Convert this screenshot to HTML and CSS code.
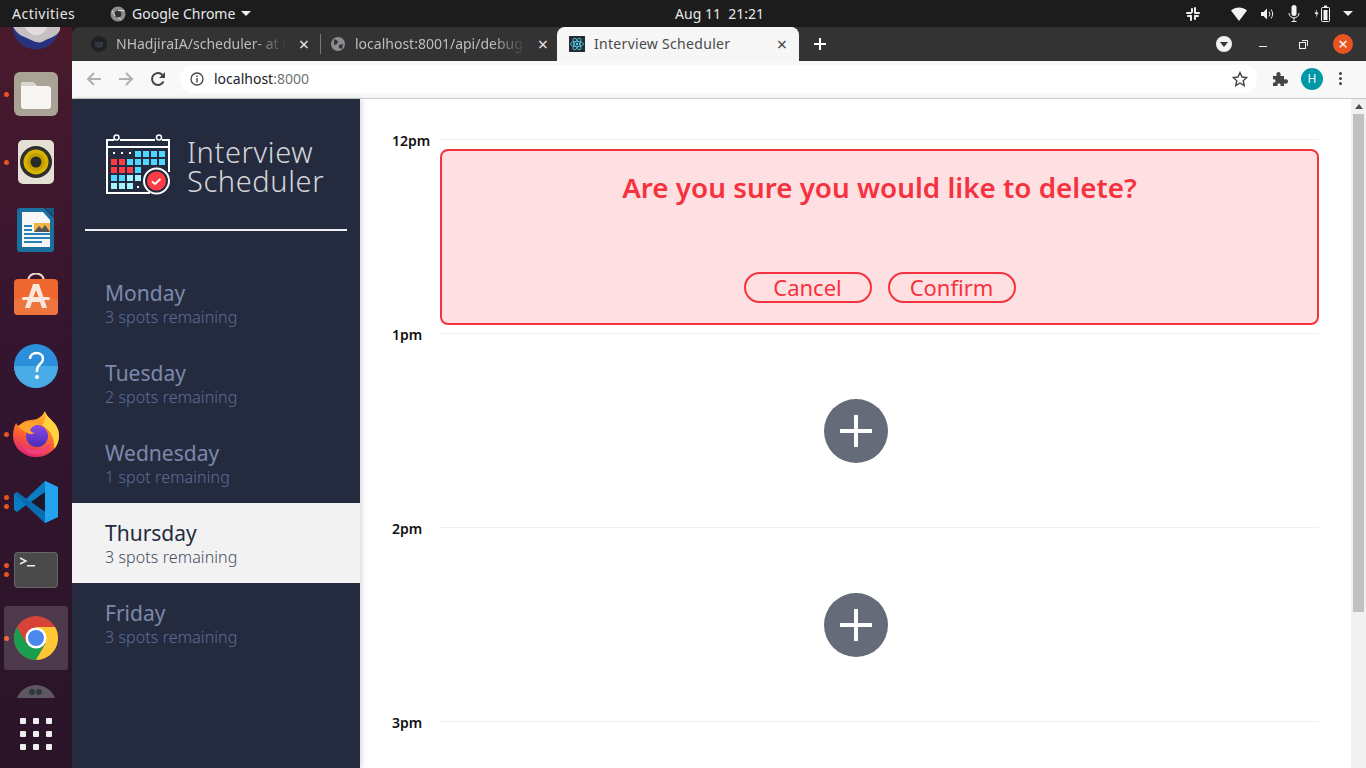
FILE: index.html
```html
<!DOCTYPE html>
<html lang="en">
<head>
  <meta charset="UTF-8" />
  <title>Interview Scheduler</title>
  <link rel="stylesheet" href="styles.css">
</head>
<body>
  <header class="topbar">
    <div class="topbar-left">
      <span class="activities">Activities</span>
      <span class="app-menu">
        <svg width="16" height="16" viewBox="0 0 16 16"><circle cx="8" cy="8" r="7.5" fill="#8d8d8d"/><circle cx="8" cy="8" r="3.4" fill="#333"/><path d="M8 4.6h6.4M5 10l-3-5.6M8 11.4 11.4 14" stroke="#ddd" stroke-width="1" fill="none"/></svg>
        Google Chrome
        <i class="caret"></i>
      </span>
    </div>
    <div class="clock">Aug 11&nbsp;&nbsp;21:21</div>
    <div class="tray">
      <svg class="tray-slack" width="14" height="14" viewBox="0 0 14 14" fill="#eee"><rect x="5" y="1" width="2" height="5" rx="1"/><rect x="8" y="0" width="2" height="6" rx="1"/><rect x="0" y="5" width="6" height="2" rx="1"/><rect x="8" y="5" width="6" height="2" rx="1"/><rect x="1" y="8" width="5" height="2" rx="1"/><rect x="8" y="8" width="5" height="2" rx="1"/><rect x="4" y="8" width="2" height="6" rx="1"/><rect x="8" y="8" width="2" height="5" rx="1"/></svg>
      <svg class="tray-wifi" width="16" height="14" viewBox="0 0 16 14"><path d="M0 3.500C4.400-.6 11.600-.6 16 3.500L8 14z" fill="#f2f2f2"/></svg>
      <svg class="tray-sound" width="15" height="14" viewBox="0 0 15 14" fill="none"><path d="M1 5h2.500L7 1.500v11L3.500 9H1z" fill="#f2f2f2"/><path d="M9 4.500a4 4 0 0 1 0 5M11 2.500a7 7 0 0 1 0 9" stroke="#f2f2f2"/></svg>
      <svg class="tray-mic" width="12" height="17" viewBox="0 0 12 17" fill="none"><rect x="3.500" y="0" width="5" height="11" rx="2.500" fill="#f2f2f2"/><path d="M1 8c0 6.500 10 6.500 10 0M6 13v3.500M3.500 16.500h5" stroke="#f2f2f2"/></svg>
      <svg class="tray-battery" width="17" height="17" viewBox="0 0 17 17" fill="none"><path d="M3 4 .6 9h2L1.800 13 4.500 7.500h-2z" fill="#f2f2f2"/><rect x="7.500" y="2.500" width="8" height="14" rx="1" stroke="#f2f2f2"/><rect x="10" y="0.500" width="3" height="2" fill="#f2f2f2"/><rect x="9.500" y="5" width="4" height="10" fill="#f2f2f2"/></svg>
      <i class="caret"></i>
    </div>
  </header>

  <div class="desktop">
    <nav class="dock">
      <div class="dock-item dock-first">
        <svg width="48" height="48" viewBox="0 0 48 48"><circle cx="24" cy="24" r="23.500" fill="#27337f"/><path d="M0 22H48V28C44 36 36 36 30 40 24 42 16 36 10 34 6 32 2 28 0 22z" fill="#c6bfc3"/><path d="M12 24H36C33 31 27 34 22 33 18 32 14 28 12 24z" fill="#e2dcdc"/></svg>
      </div>
      <div class="dock-item has-dot">
        <svg width="44" height="44" viewBox="0 0 44 44"><rect x="0" y="0" width="44" height="44" rx="6" fill="#a8a394"/><path d="M7 13a3 3 0 0 1 3-3h9l4 4h11a3 3 0 0 1 3 3v17a3 3 0 0 1-3 3H10a3 3 0 0 1-3-3z" fill="#f8f6f4"/><path d="M7 13a3 3 0 0 1 3-3h9l4 4H7z" fill="#d9d6d0"/></svg>
      </div>
      <div class="dock-item has-dot">
        <svg width="38" height="44" viewBox="0 0 38 44"><rect width="36" height="44" x="1" rx="5" fill="#e4e0d4"/><circle cx="19" cy="22" r="16" fill="#2e2e2e"/><circle cx="19" cy="22" r="12.500" fill="#d8b400"/><circle cx="19" cy="22" r="9" fill="#c29f00"/><circle cx="19" cy="22" r="5.500" fill="#2a2a2a"/></svg>
      </div>
      <div class="dock-item">
        <svg width="38" height="44" viewBox="0 0 38 44"><path d="M3 0h24l10 10v31a3 3 0 0 1-3 3H3a3 3 0 0 1-3-3V3a3 3 0 0 1 3-3z" fill="#1a6f9f"/><path d="M5 4h21l7 8v27H5z" fill="#f6f6f6"/><path d="M28 0h9v9z" fill="#125a86"/><path d="M7 17h8v2H7zM7 21h8v2H7zM7 25h26v2H7zM7 29h26v2H7zM7 33h18v2H7z" fill="#2384ba"/><rect x="17" y="15" width="16" height="9" fill="#f2b544"/><path d="M17 24l5-6 3 3 3-4 5 7z" fill="#555"/></svg>
      </div>
      <div class="dock-item">
        <svg class="dock-raised" width="44" height="44" viewBox="0 0 44 44"><path d="M14 8c0-10 16-10 16 0" fill="none" stroke="#eadcc8" stroke-width="2"/><rect y="6" width="44" height="36" rx="4" fill="#f0672f"/><rect y="26" width="44" height="16" rx="4" fill="#ee7440"/><path d="M19 11h6l8 24h-5l-2-6h-8l-2 6h-5zM22 17l-3 8h6z" fill="#fbe8dc"/><rect x="8" y="24" width="28" height="3" rx="1.500" fill="#fbe8dc"/></svg>
      </div>
      <div class="dock-item">
        <svg width="44" height="44" viewBox="0 0 44 44"><circle cx="22" cy="22" r="22" fill="#2b8fdc"/><path d="M0 22h44a22 22 0 0 1-44 0z" fill="#49ace6"/><path d="M16 15c0-8 13-8 13 0 0 5-6 5-6 11v2" fill="none" stroke="#fff" stroke-width="2.500"/><circle cx="23" cy="33" r="2" fill="#fff"/></svg>
      </div>
      <div class="dock-item has-dot">
        <svg width="46" height="46" viewBox="0 0 46 46">
          <defs>
            <linearGradient id="ffBody" x1="0.700" y1="0" x2="0.300" y2="1"><stop offset="0" stop-color="#ffc02e"/><stop offset="0.550" stop-color="#ff6a2a"/><stop offset="1" stop-color="#e0206f"/></linearGradient>
            <linearGradient id="ffGlobe" x1="0.500" y1="0" x2="0.500" y2="1"><stop offset="0" stop-color="#8a4be8"/><stop offset="1" stop-color="#4b2ab8"/></linearGradient>
          </defs>
          <path d="M32 0c1 5 6 8 10 13 3 4 4 8 4 12a23 21 0 0 1-46 0c0-5 1-9 3-13 1 2 2 3 3 3 3-4 7-6 12-6 6 0 11-3 14-9z" fill="url(#ffBody)"/>
          <path d="M32 0c1 5 6 8 10 13 3 4 4 8 4 12 0 5-2 10-5 13 1-9-2-18-12-24 3-3 4-9 3-14z" fill="#ffd23f"/>
          <circle cx="24" cy="25" r="11" fill="url(#ffGlobe)"/>
          <path d="M5 15c6-5 17-6 23-1-5-1-9 1-11 5 1 2 3 3 5 3-3 2-7 1-9-1-3-1-6-3-8-6z" fill="#ffa52a"/>
          <path d="M8 33c5 6 15 8 22 5 4-2 7-5 9-8-2 8-9 13-17 13-6 0-11-4-14-10z" fill="#f0408a"/>
        </svg>
      </div>
      <div class="dock-item has-dots">
        <svg width="44" height="42" viewBox="0 0 44 42"><path d="M31 0l13 6v30l-13 6L12 24 3 31 0 29V13l3-2 9 7z" fill="#0a7cc4"/><path d="M31 0l13 6v30l-13 6z" fill="#22a3ee"/><path d="M31 11 17 21l14 10z" fill="#211528"/><path d="M0 13l3-2 28 20v11L0 13z" fill="#0a6cb0"/></svg>
      </div>
      <div class="dock-item has-dots">
        <svg width="44" height="36" viewBox="0 0 44 36"><rect width="44" height="36" rx="4" fill="#4a4a4a"/><rect x=".5" y=".5" width="43" height="35" rx="3.500" fill="none" stroke="#666"/><path d="M6 6l6 3-6 3" fill="none" stroke="#eee" stroke-width="1.400"/><rect x="13" y="13" width="8" height="1.500" fill="#eee"/></svg>
      </div>
      <div class="dock-item has-dot is-active">
        <svg width="44" height="44" viewBox="0 0 44 44"><circle cx="22" cy="22" r="22" fill="#d9443a"/><path d="M2.950 11A22 22 0 0 0 22 44L31.500 27.500 22 22 12.500 27.500Z" fill="#1a9e50"/><path d="M41.050 11A22 22 0 0 1 22 44L31.500 27.500 22 22V11Z" fill="#fcc934"/><circle cx="22" cy="22" r="10.500" fill="#fff"/><circle cx="22" cy="22" r="8" fill="#4a88ee"/></svg>
      </div>
      <div class="dock-clipped">
        <svg width="44" height="26" viewBox="0 0 44 26"><circle cx="22" cy="33.400" r="20.400" fill="#5e5660"/><circle cx="18" cy="20" r="3" fill="#2d3a3c"/><circle cx="25" cy="20" r="3" fill="#2d3a3c"/></svg>
      </div>
      <div class="dock-grid">
        <i></i><i></i><i></i><i></i><i></i><i></i><i></i><i></i><i></i>
      </div>
    </nav>

    <div class="browser">
      <div class="tabstrip">
        <div class="tab">
          <svg class="favicon" viewBox="0 0 16 16"><circle cx="8" cy="8" r="8" fill="#1e2226"/><path d="M4 5l1.500 1h5L12 5v4c0 2-1.500 3-4 3s-4-1-4-3z" fill="#33383d"/></svg>
          <span class="tab-title">NHadjiraIA/scheduler- at t</span>
          <span class="tab-close">×</span>
        </div>
        <div class="tab tab-split">
          <svg class="favicon" viewBox="0 0 16 16"><circle cx="8" cy="8" r="7" fill="#8a8d91"/><path d="M4 3l4 2-1 3-3 1zM9 9l4-1-1 5-3-1z" fill="#333"/></svg>
          <span class="tab-title">localhost:8001/api/debug</span>
          <span class="tab-close">×</span>
        </div>
        <div class="tab tab-active">
          <svg class="favicon" viewBox="0 0 16 16" fill="none"><rect width="16" height="18" y="-1" rx="2" fill="#1f2a33"/><g stroke="#5fd3f3" stroke-width=".8"><ellipse cx="8" cy="8" rx="6.500" ry="2.600"/><ellipse cx="8" cy="8" rx="6.500" ry="2.600" transform="rotate(60 8 8)"/><ellipse cx="8" cy="8" rx="6.500" ry="2.600" transform="rotate(120 8 8)"/></g><circle cx="8" cy="8" r="1.200" fill="#5fd3f3"/></svg>
          <span class="tab-title">Interview Scheduler</span>
          <span class="tab-close">×</span>
        </div>
        <svg class="new-tab" width="14" height="14" viewBox="0 0 14 14"><path d="M7 1v12M1 7h12" stroke="#fff" stroke-width="2"/></svg>
        <div class="window-btns">
          <span class="profile-down"><i class="caret caret-dark"></i></span>
          <span class="win-min"></span>
          <svg class="win-restore" width="9" height="9" viewBox="0 0 9 9" fill="none"><rect x=".5" y="2.500" width="6" height="6" stroke="#eee"/><path d="M3 .5h5.500V6" stroke="#eee"/></svg>
          <span class="win-close">×</span>
        </div>
      </div>

      <div class="toolbar">
        <svg class="tool" width="16" height="16" viewBox="0 0 16 16" fill="none"><path d="M15 8H2M8 2 2 8l6 6" stroke="#b0b0b0" stroke-width="2"/></svg>
        <svg class="tool" width="16" height="16" viewBox="0 0 16 16" fill="none"><path d="M1 8h13M8 2l6 6-6 6" stroke="#b0b0b0" stroke-width="2"/></svg>
        <svg class="tool" width="16" height="16" viewBox="0 0 16 16" fill="none"><path d="M13.500 10.500A6 6 0 1 1 12.500 4" stroke="#444" stroke-width="2"/><path d="M15 1v6H9z" fill="#444"/></svg>
        <div class="omnibox">
          <svg width="14" height="14" viewBox="0 0 14 14" fill="none"><circle cx="7" cy="7" r="6" stroke="#444" stroke-width="1.300"/><path d="M7 6v4.500M7 3.500v1.500" stroke="#444" stroke-width="1.400"/></svg>
          <span class="url">localhost<span class="url-port">:8000</span></span>
          <svg class="star" width="16" height="16" viewBox="0 0 16 16"><path d="M8 1.500 10 6l4.800.5-3.600 3.200 1 4.800L8 12l-4.200 2.500 1-4.800L1.200 6.500 6 6z" fill="none" stroke="#444" stroke-width="1.400"/></svg>
        </div>
        <svg class="tool-puzzle" width="16" height="16" viewBox="0 0 16 16"><path d="M1 5h3.500C4 2 5 1 6.500 1S9 2 8.500 5H12v3.500c3-.5 4 .5 4 2s-1 2.500-4 2V15H8.500c.5-2-.500-2.500-1.500-2.500S5 13 5.500 15H1v-3.500c2 .5 2.500-.5 2.500-1.500S3 8 1 8.500z" fill="#444"/></svg>
        <span class="avatar">H</span>
        <span class="kebab"><i></i><i></i><i></i></span>
      </div>

      <div class="page">
        <aside class="sidebar">
          <div class="brand">
            <svg class="brand-logo" width="64" height="62" viewBox="0 0 64 62" fill="none">
              <path d="M44 59H1V6h7M14 6h35M56 6h7v32" stroke="#fff" stroke-width="2"/>
              <path d="M1 13h62" stroke="#fff" stroke-width="2"/>
              <circle cx="10.500" cy="3.500" r="2.500" stroke="#fff" stroke-width="1.500"/>
              <circle cx="53" cy="3.500" r="2.500" stroke="#fff" stroke-width="1.500"/>
              <g fill="#fff">
                <rect x="7" y="18" width="2" height="2"/><rect x="15" y="18" width="2" height="2"/><rect x="23" y="18" width="2" height="2"/><rect x="31" y="52" width="2" height="2"/>
              </g>
              <g fill="#4fd8ff">
                <rect x="29" y="17" width="6" height="6"/><rect x="37" y="17" width="6" height="6"/><rect x="45" y="17" width="6" height="6"/><rect x="53" y="17" width="6" height="6"/>
                <rect x="21" y="25" width="6" height="6"/><rect x="29" y="25" width="6" height="6"/><rect x="37" y="25" width="6" height="6"/><rect x="45" y="25" width="6" height="6"/><rect x="53" y="25" width="6" height="6"/>
                <rect x="29" y="33" width="6" height="6"/><rect x="5" y="41" width="6" height="6"/><rect x="13" y="41" width="6" height="6"/>
              </g>
              <g fill="#ff3b45">
                <rect x="5" y="25" width="6" height="6"/><rect x="13" y="25" width="6" height="6"/>
                <rect x="5" y="33" width="6" height="6"/><rect x="13" y="33" width="6" height="6"/><rect x="21" y="33" width="6" height="6"/>
              </g>
              <g fill="#a5f3ff">
                <rect x="21" y="41" width="6" height="6"/><rect x="29" y="41" width="6" height="6"/>
                <rect x="5" y="49" width="6" height="6"/><rect x="13" y="49" width="6" height="6"/><rect x="21" y="49" width="6" height="6"/>
              </g>
              <circle cx="50.500" cy="47" r="12.500" fill="#242b3f" stroke="#fff" stroke-width="2"/>
              <circle cx="50.500" cy="47" r="9.500" fill="#ff3b45"/>
              <path d="M46 47.500l3 2.500 5.500-5" stroke="#fff" stroke-width="2"/>
            </svg>
            <div class="brand-name">Interview<br>Scheduler</div>
          </div>
          <hr class="brand-rule">
          <ul class="days">
            <li class="day"><h2>Monday</h2><p>3 spots remaining</p></li>
            <li class="day"><h2>Tuesday</h2><p>2 spots remaining</p></li>
            <li class="day"><h2>Wednesday</h2><p>1 spot remaining</p></li>
            <li class="day day-selected"><h2>Thursday</h2><p>3 spots remaining</p></li>
            <li class="day"><h2>Friday</h2><p>3 spots remaining</p></li>
          </ul>
        </aside>

        <main class="schedule">
          <article class="slot">
            <h4 class="slot-time">12pm</h4>
            <div class="slot-body">
              <div class="confirm">
                <h1>Are you sure you would like to delete?</h1>
                <div class="confirm-actions">
                  <button type="button">Cancel</button>
                  <button type="button">Confirm</button>
                </div>
              </div>
            </div>
          </article>
          <article class="slot">
            <h4 class="slot-time">1pm</h4>
            <div class="slot-body slot-empty">
              <span class="add-btn"><svg width="32" height="32" viewBox="0 0 32 32"><path d="M16 0v32M0 16h32" stroke="#fff" stroke-width="4"/></svg></span>
            </div>
          </article>
          <article class="slot">
            <h4 class="slot-time">2pm</h4>
            <div class="slot-body slot-empty">
              <span class="add-btn"><svg width="32" height="32" viewBox="0 0 32 32"><path d="M16 0v32M0 16h32" stroke="#fff" stroke-width="4"/></svg></span>
            </div>
          </article>
          <article class="slot">
            <h4 class="slot-time">3pm</h4>
            <div class="slot-body"></div>
          </article>
        </main>

        <div class="scrollbar">
          <i class="arrow-up"></i>
          <div class="thumb"></div>
        </div>
      </div>
    </div>
  </div>
</body>
</html>
```

FILE: styles.css
```css
* {
  box-sizing: border-box;
}

html, body {
  margin: 0;
  height: 768px;
  overflow: hidden;
}

body {
  font-family: "Noto Sans", sans-serif;
  background-color: #1c1c1c;
}

h1, h2, h4, p, ul {
  margin: 0;
  padding: 0;
}

/* ubuntu top bar */
.topbar {
  height: 27px;
  background-color: #1c1c1c;
  color: #e8e8e8;
  font-size: 14px;
  display: grid;
  grid-template-columns: 1fr auto 1fr;
  align-items: center;
  padding: 0 12px;
}

.topbar-left {
  display: flex;
  align-items: center;
}

.activities {
  width: 98px;
  letter-spacing: 0.5px;
}

.app-menu {
  display: flex;
  align-items: center;
  gap: 6px;
}

.caret {
  width: 0;
  height: 0;
  border-left: 5px solid transparent;
  border-right: 5px solid transparent;
  border-top: 5px solid #eee;
  display: inline-block;
}

.clock {
  margin-left: 73px;
}

.tray {
  display: flex;
  align-items: center;
  justify-content: flex-end;
  padding-right: 1px;
}

.tray-wifi {
  margin-left: 31px;
}

.tray-sound {
  margin-left: 13px;
}

.tray-mic {
  margin-left: 13px;
}

.tray-battery {
  margin-left: 14px;
}

.tray .caret {
  margin-left: 12px;
}

/* dock + browser */
.desktop {
  display: flex;
  height: 741px;
}

.dock {
  width: 72px;
  flex: none;
  background: linear-gradient(180deg, #4a1a2c 0%, #33152f 45%, #2a1428 100%);
  overflow: hidden;
}

.dock-item {
  height: 68px;
  display: flex;
  align-items: center;
  justify-content: center;
  position: relative;
}

.dock-first {
  margin-top: -35px;
}

.dock-raised {
  margin-bottom: 6px;
}

.has-dot::before,
.has-dots::before,
.has-dots::after {
  content: "";
  position: absolute;
  left: 4px;
  top: 32px;
  width: 5px;
  height: 5px;
  border-radius: 50%;
  background-color: #e95420;
}

.has-dots::before {
  top: 27px;
}

.has-dots::after {
  top: 36px;
}

.is-active::after {
  content: "";
  position: absolute;
  left: 4px;
  right: 4px;
  top: 2px;
  bottom: 2px;
  border-radius: 3px;
  background-color: rgba(255,255,255,0.16);
}

.is-active svg {
  position: relative;
  z-index: 1;
}

.dock-clipped {
  height: 26px;
  display: flex;
  justify-content: center;
  overflow: hidden;
}

.dock-grid {
  margin: 20px 0 0 20px;
  width: 32px;
  display: grid;
  grid-template-columns: repeat(3, 6px);
  grid-auto-rows: 6px;
  gap: 7px;
}

.dock-grid i {
  background-color: #eee;
  border-radius: 1px;
}

.browser {
  flex: 1;
  min-width: 0;
  display: flex;
  flex-direction: column;
}

/* tabs */
.tabstrip {
  height: 34px;
  flex: none;
  background-color: #333334;
  display: flex;
  align-items: center;
  padding-left: 9px;
  border-radius: 8px 0 0 0;
}

.tab {
  width: 239px;
  height: 34px;
  display: flex;
  align-items: center;
  gap: 9px;
  padding: 0 8px 0 10px;
  color: #bdbec0;
  font-size: 14px;
  position: relative;
}

.tab-split::before {
  content: "";
  position: absolute;
  left: 0;
  top: 7px;
  height: 20px;
  width: 1px;
  background-color: #7a7a7a;
}

.favicon {
  width: 16px;
  height: 16px;
  flex: none;
}

.tab-title {
  flex: 1;
  min-width: 0;
  padding-bottom: 1px;
  white-space: nowrap;
  overflow: hidden;
  -webkit-mask-image: linear-gradient(90deg, #000 80%, transparent 100%);
  mask-image: linear-gradient(90deg, #000 80%, transparent 100%);
}

.tab-close {
  width: 16px;
  flex: none;
  text-align: center;
  color: #e8e8e8;
  font-size: 18px;
  line-height: 16px;
}

.tab-active {
  background-color: #f6f6f6;
  color: #4a4a4a;
  border-radius: 8px 8px 0 0;
  box-shadow: -2px 0 0 #f6f6f6, 1px 0 0 #f6f6f6;
}

.tab-active .tab-close {
  color: #444;
}

.tab-active .tab-title {
  letter-spacing: 0.3px;
  -webkit-mask-image: none;
  mask-image: none;
}

.new-tab {
  margin-left: 15px;
}

.window-btns {
  margin-left: auto;
  display: flex;
  align-items: center;
  padding-right: 13px;
}

.profile-down {
  width: 16px;
  height: 16px;
  border-radius: 50%;
  background-color: #f2f2f2;
  display: flex;
  align-items: center;
  justify-content: center;
}

.caret-dark {
  border-left-width: 4px;
  border-right-width: 4px;
  border-top-color: #333;
}

.win-min {
  width: 8px;
  height: 1px;
  background-color: #eee;
  margin: 5px 0 0 27px;
}

.win-restore {
  margin-left: 32px;
}

.win-close {
  width: 20px;
  height: 20px;
  margin-left: 25px;
  border-radius: 50%;
  background-color: #e95420;
  color: #fff;
  font-size: 17px;
  line-height: 19px;
  text-align: center;
}

/* address bar */
.toolbar {
  height: 38px;
  flex: none;
  background-color: #f8f8f8;
  border-bottom: 1px solid #c8c8c8;
  display: flex;
  align-items: center;
  padding: 0 0 2px 14px;
}

.tool {
  margin-right: 16px;
}

.omnibox {
  width: 1077px;
  height: 28px;
  margin-left: -2px;
  padding: 0 9px 0 10px;
  border-radius: 14px;
  background-color: #fff;
  display: flex;
  align-items: center;
  gap: 10px;
}

.url {
  font-size: 14px;
  color: #202124;
}

.url-port {
  color: #70757a;
}

.star {
  margin-left: auto;
}

.tool-puzzle {
  margin-left: 15px;
}

.avatar {
  width: 22px;
  height: 22px;
  margin-left: 13px;
  border-radius: 50%;
  background-color: #0097a7;
  color: #fff;
  font-size: 12px;
  line-height: 22px;
  text-align: center;
}

.kebab {
  margin-left: 16px;
  display: flex;
  flex-direction: column;
  gap: 2px;
}

.kebab i {
  width: 3px;
  height: 3px;
  border-radius: 50%;
  background-color: #444;
}

/* the scheduler page */
.page {
  flex: 1;
  min-height: 0;
  display: flex;
  background-color: #fff;
}

.sidebar {
  width: 288px;
  flex: none;
  background-color: #242b3f;
  box-shadow: 2px 0 5px rgba(0,0,0,0.15);
  padding-top: 36px;
}

.brand {
  display: flex;
  align-items: center;
  gap: 17px;
  padding-left: 34px;
  height: 60px;
}

.brand-logo {
  flex: none;
}

.brand-name {
  font-weight: 300;
  font-size: 29px;
  line-height: 29px;
  color: #d4d4d8;
  letter-spacing: 0.6px;
  padding-top: 1px;
}

.brand-rule {
  margin: 34px 13px 32px;
  height: 2px;
  border: none;
  background-color: #f2f2f2;
}

.days {
  list-style: none;
}

.day {
  height: 80px;
  padding: 17px 0 0 33px;
  color: #7d89ab;
}

.day h2 {
  font-size: 21px;
  font-weight: 400;
  line-height: 26px;
}

.day p {
  font-size: 16px;
  font-weight: 300;
  line-height: 22px;
  letter-spacing: 0.1px;
  color: #5f6d97;
}

.day-selected {
  background-color: #f2f2f2;
  color: #222a3e;
}

.day-selected p {
  color: #444c60;
}

.schedule {
  flex: 1;
  min-width: 0;
  overflow: hidden;
  padding: 40px 32px 0;
}

.slot {
  height: 194px;
  display: grid;
  grid-template-columns: 48px 1fr;
}

.slot-time {
  margin-top: -6px;
  font-size: 14px;
  line-height: 16px;
  font-weight: 600;
  color: #111;
}

.slot-body {
  border-top: 1px solid #f0f0f0;
}

.slot-empty {
  padding-top: 65px;
  display: flex;
  justify-content: center;
  align-items: flex-start;
}

.add-btn {
  width: 64px;
  height: 64px;
  margin-right: 47px;
  border-radius: 50%;
  background-color: #666b79;
  display: flex;
  align-items: center;
  justify-content: center;
}

.confirm {
  height: 176px;
  margin-top: 9px;
  padding-top: 17px;
  border: 2px solid #f6323f;
  border-radius: 8px;
  background-color: #fee0e2;
  color: #f6323f;
  display: flex;
  flex-direction: column;
  align-items: center;
  justify-content: space-between;
}

.confirm h1 {
  font-size: 27.8px;
  font-weight: 600;
  line-height: 38px;
}

.confirm-actions {
  display: flex;
  gap: 16px;
  margin-bottom: 20px;
}

.confirm-actions button {
  width: 128px;
  height: 31px;
  padding: 0;
  font-family: inherit;
  font-size: 22px;
  line-height: 27px;
  color: #f6323f;
  background: none;
  border: 2px solid #f6323f;
  border-radius: 16px;
}

.scrollbar {
  width: 15px;
  flex: none;
  background-color: #f1f1f1;
}

.arrow-up {
  display: block;
  width: 0;
  height: 0;
  margin: 5px auto 0;
  border-left: 4px solid transparent;
  border-right: 4px solid transparent;
  border-bottom: 5px solid #505050;
}

.thumb {
  margin: 5px 2px 0;
  height: 498px;
  background-color: #c1c1c1;
}
```
